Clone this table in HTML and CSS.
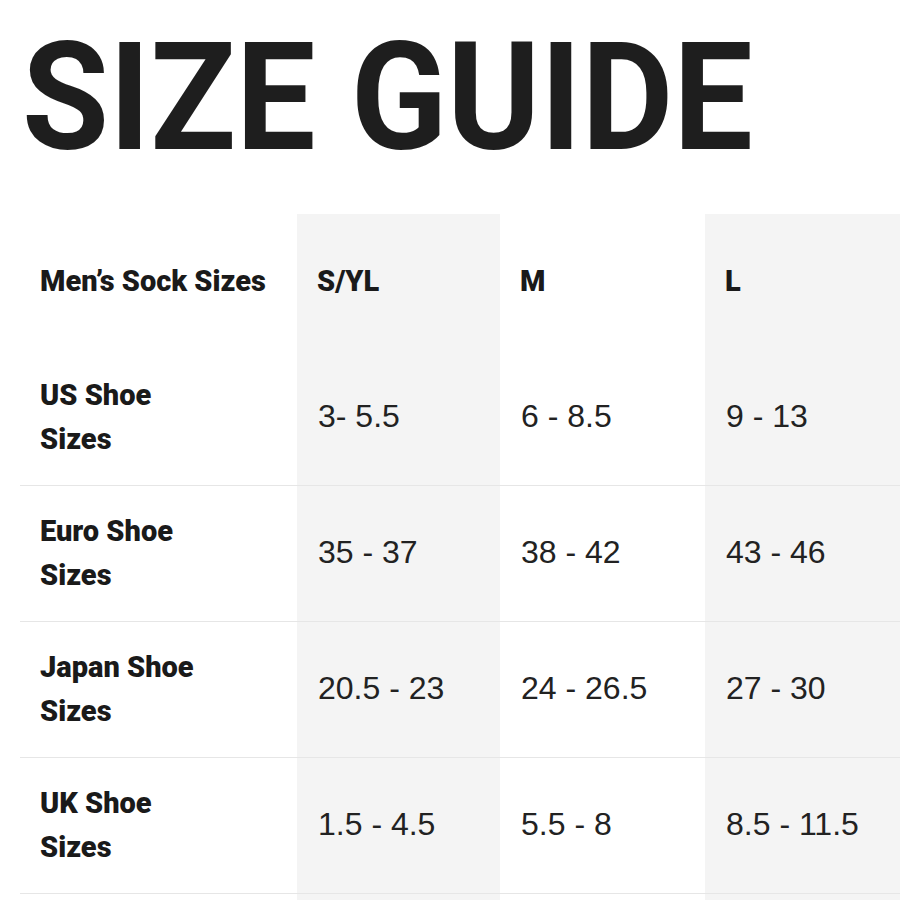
FILE: index.html
```html
<!DOCTYPE html>
<html lang="en">
<head>
<meta charset="utf-8">
<title>Size Guide</title>
<link rel="stylesheet" href="styles.css">
</head>
<body>
<h1 class="title">SIZE GUIDE</h1>
<div class="chart">
  <div class="row head">
    <div class="cell label">Men’s Sock Sizes</div>
    <div class="cell shade label">S/YL</div>
    <div class="cell label">M</div>
    <div class="cell shade label">L</div>
  </div>
  <div class="row line">
    <div class="cell label">US Shoe<br>Sizes</div>
    <div class="cell shade val">3- 5.5</div>
    <div class="cell val">6 - 8.5</div>
    <div class="cell shade val">9 - 13</div>
  </div>
  <div class="row line">
    <div class="cell label">Euro Shoe<br>Sizes</div>
    <div class="cell shade val">35 - 37</div>
    <div class="cell val">38 - 42</div>
    <div class="cell shade val">43 - 46</div>
  </div>
  <div class="row line">
    <div class="cell label">Japan Shoe<br>Sizes</div>
    <div class="cell shade val">20.5 - 23</div>
    <div class="cell val">24 - 26.5</div>
    <div class="cell shade val">27 - 30</div>
  </div>
  <div class="row line">
    <div class="cell label">UK Shoe<br>Sizes</div>
    <div class="cell shade val">1.5 - 4.5</div>
    <div class="cell val">5.5 - 8</div>
    <div class="cell shade val">8.5 - 11.5</div>
  </div>
  <div class="row line">
    <div class="cell label"></div>
    <div class="cell shade val"></div>
    <div class="cell val"></div>
    <div class="cell shade val"></div>
  </div>
</div>
</body>
</html>
```
FILE: styles.css
```css
html, body {
  margin: 0;
  padding: 0;
  background: #ffffff;
  overflow-x: hidden;
}
body {
  color: #1e1e1e;
  font-family: Roboto, "Liberation Sans", sans-serif;
}
.title {
  margin: 23px 0 41px 22px;
  font-family: Roboto, "Liberation Sans", sans-serif;
  font-weight: 700;
  font-size: 150px;
  line-height: 150px;
  letter-spacing: 0;
  color: #1e1e1e;
  transform: scaleX(0.942);
  transform-origin: 0 50%;
}
.chart {
  margin-left: 20px;
  width: 880px;
}
.row {
  display: grid;
  grid-template-columns: 277px 203px 205px 195px;
  height: 136px;
  box-sizing: border-box;
}
.row.line {
  border-bottom: 1px solid #e6e6e6;
}
.cell {
  display: flex;
  align-items: center;
  padding-left: 20px;
  box-sizing: border-box;
}
.shade {
  background: #f4f4f4;
}
.label {
  font-family: Roboto, "Liberation Sans", sans-serif;
  font-weight: 900;
  font-size: 29px;
  line-height: 44px;
  color: #1a1a1a;
  padding-bottom: 2px;
}
.val {
  font-family: "Liberation Sans", Arial, sans-serif;
  font-weight: 400;
  font-size: 32px;
  line-height: 40px;
  color: #222222;
  padding-left: 21px;
  padding-bottom: 3px;
}
```
